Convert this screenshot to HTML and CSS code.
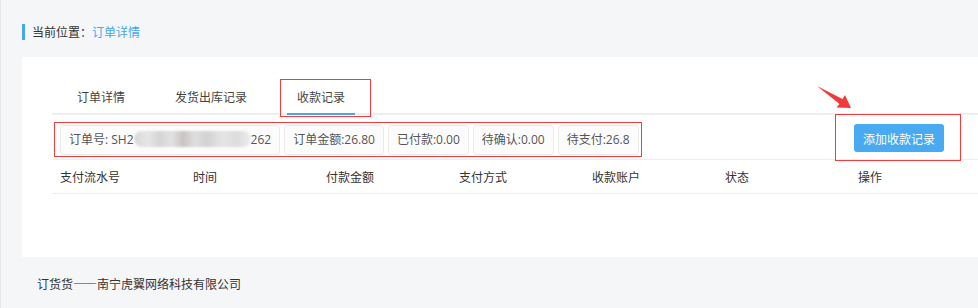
FILE: index.html
```html
<!DOCTYPE html>
<html lang="zh-CN">
<head>
    <meta charset="UTF-8">
    <title>订单详情</title>
    <link rel="stylesheet" href="styles.css">
</head>
<body>
    <div class="crumb">
        <span class="crumb-bar">当前位置：<span class="crumb-current">订单详情</span></span>
    </div>

    <div class="panel">
        <div class="tabs">
            <div class="tab">订单详情</div>
            <div class="tab">发货出库记录</div>
            <div class="tab active">收款记录</div>
        </div>

        <div class="toolbar">
            <div class="info">
                <div class="info-item">订单号: SH2<span class="masked"></span>262</div>
                <div class="info-item">订单金额:26.80</div>
                <div class="info-item">已付款:0.00</div>
                <div class="info-item">待确认:0.00</div>
                <div class="info-item">待支付:26.8</div>
            </div>
            <button class="btn-add">添加收款记录</button>
        </div>

        <div class="table-head">
            <div>支付流水号</div>
            <div>时间</div>
            <div>付款金额</div>
            <div>支付方式</div>
            <div>收款账户</div>
            <div>状态</div>
            <div>操作</div>
        </div>

        <!-- red annotation marks -->
        <div class="mark mark-tab"></div>
        <div class="mark mark-info"></div>
        <div class="mark mark-btn"></div>
    </div>

    <svg class="arrow" width="44" height="34" viewBox="0 0 44 34">
        <polygon points="0,0 25.5,13 28,9 34,22 19.5,21.5 22.5,18" fill="#f23a3a"/>
    </svg>

    <div class="footer">订货货——南宁虎翼网络科技有限公司</div>
</body>
</html>
```

FILE: styles.css
```css
body {
    margin: 0;
    padding: 0;
    background-color: #f5f6f8;
    font-family: "Noto Sans CJK SC", "Microsoft YaHei", sans-serif;
    font-size: 12px;
    color: #333;
    overflow: hidden;
    height: 308px;
    position: relative;
    border-left: 1px solid #e6e7e9;
    box-sizing: border-box;
}

.crumb {
    padding: 24px 0 0 21px;
    height: 17px;
}

.crumb-bar {
    display: block;
    border-left: 3px solid #46a6f0;
    padding-left: 7px;
    line-height: 16px;
    height: 16px;
}

.crumb-current {
    color: #46a6f0;
}

.panel {
    position: relative;
    margin: 16px 0 0 21px;
    width: 1000px;
    height: 200px;
    background-color: #fff;
    padding: 23px 0 0 30px;
    box-sizing: border-box;
}

.tabs {
    display: flex;
    border-bottom: 2px solid #eeeeee;
    height: 33px;
}

.tab {
    position: relative;
    padding: 0 25px;
    line-height: 34px;
    color: #444;
}

.tab.active::after {
    content: "";
    position: absolute;
    left: 15px;
    right: 15px;
    bottom: -2px;
    height: 2px;
    background-color: #46a6f0;
}

.toolbar {
    display: flex;
    align-items: flex-start;
    padding: 10px 78px 4px 8px;
    border-bottom: 1px solid #eeeeee;
}

.info {
    display: flex;
    gap: 4px;
}

.info-item {
    height: 28px;
    line-height: 28px;
    padding: 0 8px;
    border: 1px solid #ebebeb;
    border-radius: 3px;
    background-color: #fcfcfc;
    color: #555;
    white-space: nowrap;
    font-family: "Open Sans", "Noto Sans CJK SC", sans-serif;
}

.masked {
    display: inline-block;
    width: 117px;
    height: 16px;
    vertical-align: -3px;
    border-radius: 8px;
    background: linear-gradient(90deg, #d9d9d9 0%, #e6e6e6 12%, #d4d4d4 22%, #e2e2e2 32%, #c9c4c2 42%, #dedede 52%, #d2d2d2 62%, #e5e5e5 76%, #dcdcdc 88%, #eeeeee 100%);
    filter: blur(1px);
}

.btn-add {
    margin-left: auto;
    margin-top: -1px;
    height: 28px;
    padding: 0 9px;
    border: none;
    border-radius: 3px;
    background-color: #48aaf0;
    color: #fff;
    font-family: inherit;
    font-size: 12px;
    cursor: pointer;
}

.table-head {
    display: grid;
    grid-template-columns: repeat(7, 133px);
    height: 33px;
    line-height: 34px;
    border-bottom: 1px solid #eeeeee;
}

.table-head div {
    padding-left: 8px;
}

.mark {
    position: absolute;
    border: 1px solid #f03c3c;
}

.mark-tab {
    left: 258px;
    top: 22px;
    width: 89px;
    height: 36px;
}

.mark-info {
    left: 32px;
    top: 65px;
    width: 586px;
    height: 33px;
}

.mark-btn {
    left: 813px;
    top: 57px;
    width: 124px;
    height: 45px;
}

.arrow {
    position: absolute;
    left: 816px;
    top: 86px;
}

.footer {
    padding: 19px 0 0 36px;
    line-height: 16px;
    color: #333;
}
```
